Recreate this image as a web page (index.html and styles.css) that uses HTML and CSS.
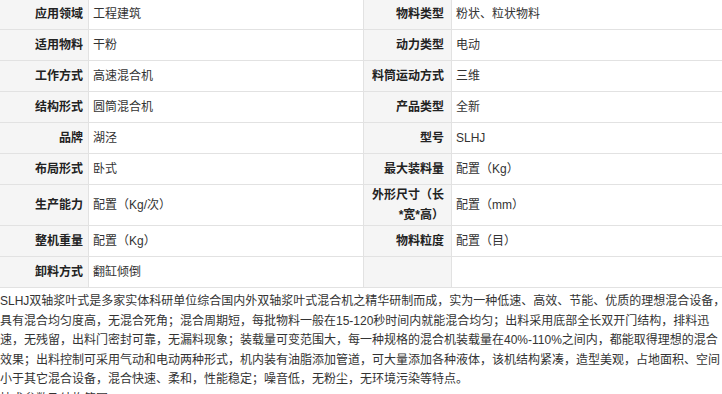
FILE: index.html
```html
<!DOCTYPE html>
<html lang="zh-CN">
<head>
<meta charset="utf-8">
<title>产品参数</title>
<link rel="stylesheet" href="styles.css">
</head>
<body>
<div class="page">
  <table class="spec">
    <colgroup>
      <col class="c-key1">
      <col class="c-val1">
      <col class="c-key2">
      <col class="c-val2">
    </colgroup>
    <tbody>
      <tr><td class="k">应用领域</td><td>工程建筑</td><td class="k k2">物料类型</td><td>粉状、粒状物料</td></tr>
      <tr><td class="k">适用物料</td><td>干粉</td><td class="k k2">动力类型</td><td>电动</td></tr>
      <tr><td class="k">工作方式</td><td>高速混合机</td><td class="k k2">料筒运动方式</td><td>三维</td></tr>
      <tr><td class="k">结构形式</td><td>圆筒混合机</td><td class="k k2">产品类型</td><td>全新</td></tr>
      <tr><td class="k">品牌</td><td>湖泾</td><td class="k k2">型号</td><td>SLHJ</td></tr>
      <tr><td class="k">布局形式</td><td>卧式</td><td class="k k2">最大装料量</td><td>配置（Kg）</td></tr>
      <tr><td class="k">生产能力</td><td>配置（Kg/次）</td><td class="k k2">外形尺寸（长*宽*高）</td><td>配置（mm）</td></tr>
      <tr><td class="k">整机重量</td><td>配置（Kg）</td><td class="k k2">物料粒度</td><td>配置（目）</td></tr>
      <tr><td class="k">卸料方式</td><td>翻缸倾倒</td><td class="k k2"></td><td></td></tr>
    </tbody>
  </table>
  <p class="intro">SLHJ双轴浆叶式是多家实体科研单位综合国内外双轴浆叶式混合机之精华研制而成，实为一种低速、高效、节能、优质的理想混合设备，具有混合均匀度高，无混合死角；混合周期短，每批物料一般在15-120秒时间内就能混合均匀；出料采用底部全长双开门结构，排料迅速，无残留，出料门密封可靠，无漏料现象；装载量可变范围大，每一种规格的混合机装载量在40%-110%之间内，都能取得理想的混合效果；出料控制可采用气动和电动两种形式，机内装有油脂添加管道，可大量添加各种液体，该机结构紧凑，造型美观，占地面积、空间小于其它混合设备，混合快速、柔和，性能稳定；噪音低，无粉尘，无环境污染等特点。</p>
  <p class="intro">技术参数及结构简图：</p>
</div>
</body>
</html>
```

FILE: styles.css
```css
html, body {
  margin: 0;
  padding: 0;
  background: #ffffff;
}

body {
  font-family: "Liberation Sans", "Noto Sans CJK SC", sans-serif;
  font-size: 12px;
  color: #333333;
  overflow: hidden;
  text-spacing-trim: space-all;
}

.page {
  width: 728px;
}

.spec {
  width: 728px;
  table-layout: fixed;
  border-collapse: separate;
  border-spacing: 0;
  margin-top: -1px;
}

.c-key1 { width: 89px; }
.c-val1 { width: 275px; }
.c-key2 { width: 88px; }
.c-val2 { width: 276px; }

.spec td {
  height: 30px;
  padding: 0 4px;
  border-right: 1px solid #e2e2e2;
  border-bottom: 1px solid #e2e2e2;
  line-height: 20px;
  vertical-align: middle;
  color: #333333;
}

.spec td:last-child {
  border-right: none;
}

.spec .k {
  background: #f5f5f5;
  font-weight: bold;
  text-align: right;
  padding: 0 5px 0 5px;
  color: #222222;
}

.spec .k2 {
  padding: 0 7px 0 5px;
}

.intro {
  margin: 4px 0 0;
  line-height: 19.5px;
}

.intro + .intro {
  margin-top: 0;
}
```
